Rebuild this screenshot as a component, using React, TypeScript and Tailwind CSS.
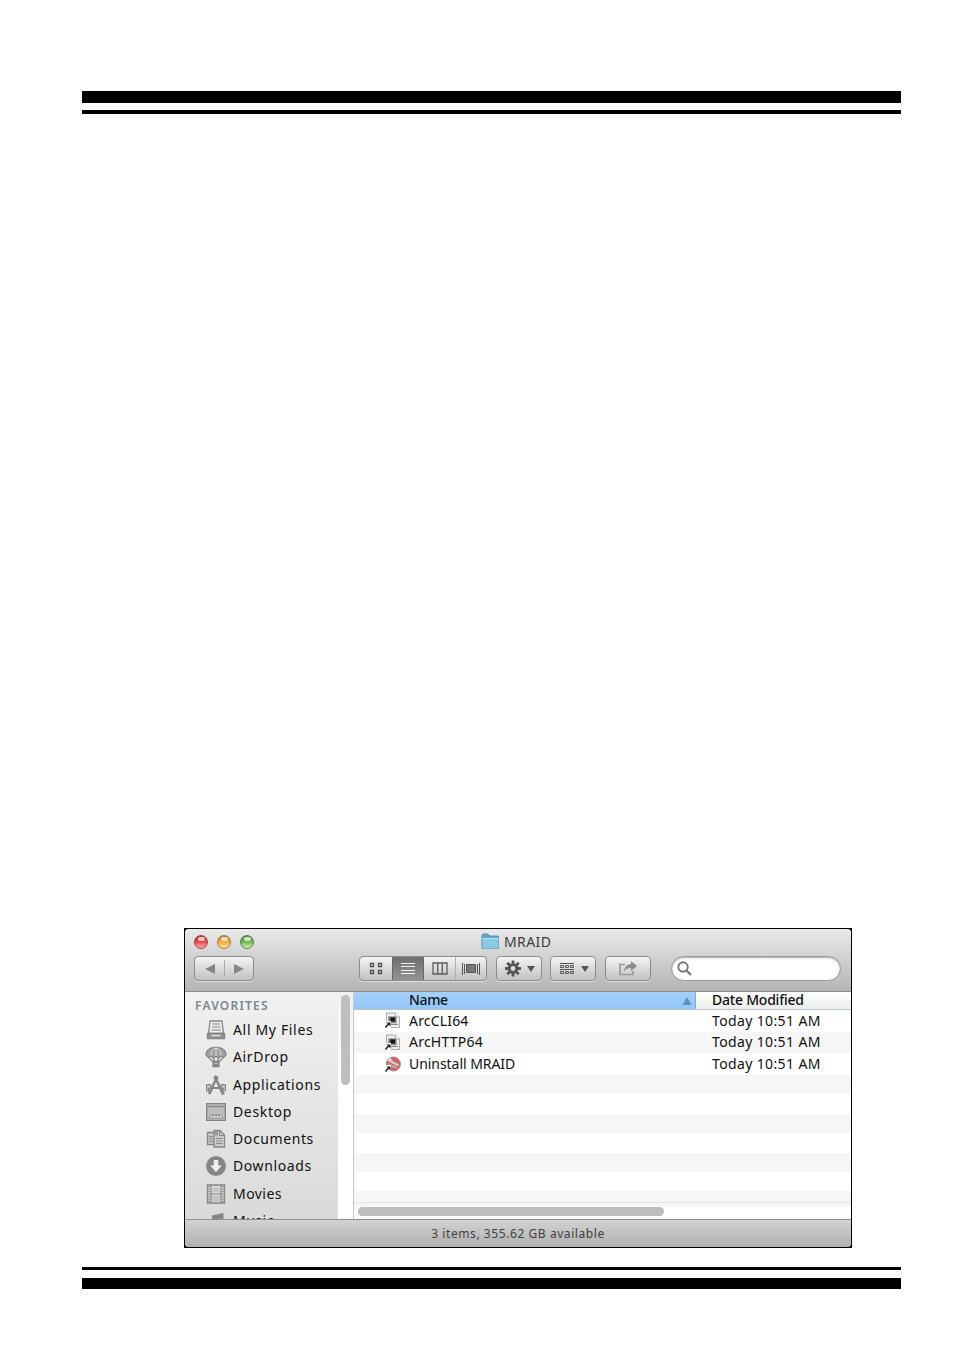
import type { ReactNode } from "react";

const BUTTON =
	"flex h-[25px] rounded-[4px] border border-[#8c8c8c] bg-linear-to-b from-[#f4f4f4] to-[#c2c2c2] shadow-[0_1px_0_#dedede]";

interface IconProps {
	children: ReactNode;
}

function SideIcon({ children }: IconProps) {
	return (
		<svg className="shrink-0" width="22" height="22" viewBox="0 0 22 22" fill="none" stroke="#858585" strokeWidth="1.3">
			{children}
		</svg>
	);
}

const favorites = [
	{
		name: "All My Files",
		tracking: "tracking-[0.66px]",
		icon: (
			<SideIcon>
				<path d="M5 2h12l1.500 12.500h-15z" fill="#ececec" />
				<path d="M7 5h8M7 8h8.500M6.500 11h9.500" strokeWidth="1.200" />
				<path d="M2.500 14.500h17v5h-17z" fill="#929292" />
				<path d="M6.500 16.500h9" stroke="#e2e2e2" strokeWidth="1.500" />
			</SideIcon>
		),
	},
	{
		name: "AirDrop",
		tracking: "tracking-[0.65px]",
		icon: (
			<SideIcon>
				<path d="M1 9C1 4 5.500 1.300 11 1.300S21 4 21 9l-2.500 2.500L16 10l-2.200 2L11 10.400 8.200 12 6 10l-2.500 1.500z" fill="#a2a2a2" />
				<path d="M6 9.500c0-4 2-7 5-7.500 3 .5 5 3.500 5 7.500M11 2v8" stroke="#dedede" strokeWidth="1" />
				<path d="M3.500 11.500l5 4.500M18.500 11.500l-5 4.500M8.500 12l1 3M13.500 12l-1 3" strokeWidth="1.200" />
				<path d="M8 15.500h6v5H8z" fill="#858585" />
				<path d="M9.500 17.500h3" stroke="#ccc" strokeWidth="1" />
			</SideIcon>
		),
	},
	{
		name: "Applications",
		tracking: "tracking-[0.63px]",
		icon: (
			<SideIcon>
				<path d="M1.500 10.500h4v3h11v-3h4v6.500h-2v-2.500h-15V17h-2z" fill="#bcbcbc" strokeWidth="1" />
				<path d="M12.500 3L4 20" strokeWidth="2.800" />
				<path d="M9.500 3L18.500 20.500" strokeWidth="2.800" />
				<path d="M9.500 2l3 1.500" strokeWidth="2.400" />
				<path d="M11 8l-2.500 5h5z" fill="#e4e4e4" stroke="none" />
			</SideIcon>
		),
	},
	{
		name: "Desktop",
		tracking: "tracking-[0.65px]",
		icon: (
			<SideIcon>
				<path d="M1.700 2.700h18.600v16.600H1.700z" fill="#bcbcbc" />
				<path d="M2 5.500h18" />
				<path d="M3.500 17.500l2-4h11l2 4z" fill="#8a8a8a" stroke="none" />
				<path d="M5.500 15.800h11.500" stroke="#f0f0f0" strokeWidth="2" strokeDasharray="2 1.100" />
			</SideIcon>
		),
	},
	{
		name: "Documents",
		tracking: "tracking-[0.6px]",
		icon: (
			<SideIcon>
				<path d="M2.500 4.500h8v12h-8z" fill="#c8c8c8" />
				<path d="M4 8.500h4M4 11h4M4 13.500h4" strokeWidth="1" />
				<path d="M9 2.500h6l4.500 4.500v12H9z" fill="#cecece" />
				<path d="M14.500 2.500V7.500h5M11 10.500h6.500M11 13h6.500M11 15.500h6.500" strokeWidth="1" />
				<path d="M9 2.500h4v5H9z" fill="#9a9a9a" stroke="none" />
			</SideIcon>
		),
	},
	{
		name: "Downloads",
		tracking: "tracking-[0.6px]",
		icon: (
			<SideIcon>
				<circle cx="11" cy="11" r="10" fill="#858585" stroke="none" />
				<path d="M8.700 5h4.600v5.500h3.700L11 17l-6-6.500h3.700z" fill="#f0f0f0" stroke="none" />
			</SideIcon>
		),
	},
	{
		name: "Movies",
		tracking: "tracking-[0.45px]",
		icon: (
			<SideIcon>
				<path d="M2.500 2h17v18h-17z" fill="#d8d8d8" />
				<path d="M6 2v18M16 2v18M6 11h10" strokeWidth="1.100" />
				<path d="M4.200 3v17M17.800 3v17" strokeWidth="1.800" strokeDasharray="1 1.500" />
				<path d="M7.500 4.500h7v4.500h-7zM7.500 13h7v5h-7z" fill="#c4c4c4" stroke="none" />
			</SideIcon>
		),
	},
	{
		name: "Music",
		tracking: "tracking-[0.5px]",
		icon: (
			<SideIcon>
				<path d="M7 5.500l11.500-2.500v13a3 2.500 0 1 1-2-2.500V8.500L9 10v7.500a3 2.500 0 1 1-2-2.500z" fill="#858585" stroke="none" />
			</SideIcon>
		),
	},
];

function AliasArrow() {
	return (
		<>
			<path d="M1 9h6v7H1z" fill="#f5f5f5" />
			<path d="M1.500 15.500l3-3.500" stroke="#222" strokeWidth="1.500" fill="none" />
			<path d="M2.500 10.500h4V14.500z" fill="#222" />
		</>
	);
}

function TerminalFile() {
	return (
		<svg width="17" height="17" viewBox="0 0 17 17">
			<path d="M2.500 1h9l4 4v10.500h-13z" fill="#eee" stroke="#aaa" />
			<path d="M11.500 1v4h4" fill="#fff" stroke="#aaa" />
			<path d="M4.500 4.500h8v6.500h-8z" fill="#777" stroke="#aaa" />
			<path d="M6.500 5.500h4.500v4H6.500z" fill="#151515" />
			<path d="M7 12.500h7" stroke="#888" />
			<AliasArrow />
		</svg>
	);
}

function UninstallFile() {
	return (
		<svg width="17" height="17" viewBox="0 0 17 17">
			<circle cx="9.300" cy="8" r="7" fill="#d26569" stroke="#a07d7d" />
			<path d="M2 4l4.500-2.500 2.500 4 6 3-1 1.500-5-2z" fill="#d9cfcf" />
			<path d="M3.500 7l5 2 5.500 2-3 1.500-6-3z" fill="#b8aaaa" />
			<AliasArrow />
		</svg>
	);
}

const files = [
	{ name: "ArcCLI64", tracking: "tracking-[0.18px]", date: "Today 10:51 AM", icon: <TerminalFile /> },
	{ name: "ArcHTTP64", tracking: "tracking-[0.22px]", date: "Today 10:51 AM", icon: <TerminalFile /> },
	{ name: "Uninstall MRAID", tracking: "tracking-[-0.05px]", date: "Today 10:51 AM", icon: <UninstallFile /> },
];

const lights = [
	"from-[#b52b32] via-[#e9474c] to-[#ffaaa8] border-[#a24246]",
	"from-[#c57c22] via-[#f3a93c] to-[#ffe794] border-[#a87a3c]",
	"from-[#4c8b38] via-[#73b955] to-[#d0f5ac] border-[#587f4b]",
];

function TitleBar() {
	return (
		<div className="flex h-[25px] items-center pl-[9px]">
			<div className="flex w-[287px] gap-[9px]">
				{lights.map((light) => (
					<span key={light} className={`flex h-[14px] w-[14px] justify-center rounded-full border bg-linear-to-b pt-px ${light}`}>
						<span className="h-[4px] w-[7px] rounded-full bg-white/70" />
					</span>
				))}
			</div>
			<svg width="19" height="17" viewBox="0 0 19 17">
				<path d="M1 15.500v-13l1-1.500h5l1.500 2H17l.5 1v11.500z" fill="#5fa6c6" stroke="#5993ae" />
				<path d="M1.500 5h16v10.500h-16z" fill="#8cc9e2" />
				<path d="M1.500 5.500h16" stroke="#b9e2f0" />
			</svg>
			<span className="ml-[4px] text-[14px] tracking-[0.4px] text-[#3c3c3c]">MRAID</span>
		</div>
	);
}

function Toolbar() {
	return (
		<div className="mt-[2px] flex pl-[9px]">
			<div className={`${BUTTON} w-[60px] items-center`}>
				<svg width="58" height="23" viewBox="0 0 58 23">
					<path d="M20 7v10l-10-5zM39 7v10l10-5z" fill="#858585" />
					<path d="M29.500 3v17" stroke="#aaa" />
				</svg>
			</div>
			<div className={`${BUTTON} ml-[105px] w-[128px] overflow-hidden`}>
				<div className="flex w-[32px] items-center justify-center">
					<svg width="14" height="14" viewBox="0 0 14 14" fill="none" stroke="#505050" strokeWidth="1.300">
						<path d="M1.500 1.500h3v3h-3zM9.500 1.500h3v3h-3zM1.500 8.500h3v3h-3zM9.500 8.500h3v3h-3z" />
					</svg>
				</div>
				<div className="flex w-[32px] items-center justify-center border-x border-[#656565] bg-linear-to-b from-[#6f6f6f] to-[#949494]">
					<svg width="14" height="14" viewBox="0 0 14 14" stroke="#f2f2f2">
						<path d="M0 1.500h14M0 4.500h14M0 8.500h14M0 11.500h14" />
					</svg>
				</div>
				<div className="flex w-[31px] items-center justify-center">
					<svg width="16" height="13" viewBox="0 0 16 13" fill="none" stroke="#5a5a5a" strokeWidth="1.300">
						<path d="M1 1h14v11H1zM5.700 1v11M10.300 1v11" />
					</svg>
				</div>
				<div className="flex flex-1 items-center justify-center border-l border-[#b0b0b0]">
					<svg width="18" height="12" viewBox="0 0 18 12" stroke="#555">
						<path d="M.5 0v12M2.500 1v10M15.500 1v10M17.500 0v12" />
						<path d="M4.500 1.500h9v8h-9z" fill="#777" />
					</svg>
				</div>
			</div>
			<div className={`${BUTTON} ml-[9px] w-[46px] items-center`}>
				<svg width="44" height="23" viewBox="0 0 44 23">
					<g stroke="#555" strokeWidth="2.800">
						<path d="M16 3.500v16M8 11.500h16M10.300 5.800l11.400 11.400M21.700 5.800L10.300 17.200" />
						<circle cx="16" cy="11.500" r="3.800" fill="#ddd" />
					</g>
					<path d="M30 9h8l-4 6z" fill="#555" />
				</svg>
			</div>
			<div className={`${BUTTON} ml-[8px] w-[46px] items-center`}>
				<svg width="44" height="23" viewBox="0 0 44 23">
					<path d="M9 6.500h14M9 12.500h14" stroke="#555" />
					<path d="M9.500 8.500h3v2h-3zM14.500 8.500h3v2h-3zM19.500 8.500h3v2h-3zM9.500 14.500h3v2h-3zM14.500 14.500h3v2h-3zM19.500 14.500h3v2h-3z" fill="none" stroke="#555" />
					<path d="M30 9h8l-4 6z" fill="#555" />
				</svg>
			</div>
			<div className={`${BUTTON} ml-[9px] w-[46px] items-center justify-center`}>
				<svg width="18" height="15" viewBox="0 0 18 15">
					<path d="M6 3.500H1v10h13v-3.500" fill="none" stroke="#999" strokeWidth="1.700" />
					<path d="M12 0l6 5-6 5V7C8.500 7 6.500 8 5 10.500 5.300 6 8 3.300 12 3z" fill="#8c8c8c" />
				</svg>
			</div>
			<div className="ml-[20px] flex h-[25px] w-[170px] items-center rounded-full border border-[#999] bg-white pl-[5px] shadow-[inset_0_1px_2px_#aaa]">
				<svg width="15" height="15" viewBox="0 0 15 15" fill="none" stroke="#777">
					<circle cx="6" cy="6" r="4.700" strokeWidth="1.900" />
					<path d="M9.500 9.500l4.500 4.500" strokeWidth="2.300" />
				</svg>
			</div>
		</div>
	);
}

function Sidebar() {
	return (
		<>
			<div className="w-[153px] overflow-hidden bg-linear-to-b from-[#f1f1f1] to-[#dadada]">
				<div className="flex h-[24.300px] items-center pt-[3px] pl-[10px] text-[12px] font-semibold tracking-[1.2px] text-[#7d868f]">FAVORITES</div>
				{favorites.map(({ name, tracking, icon }) => (
					<div key={name} className="flex h-[27.300px] items-center gap-[6px] pl-[20px]">
						{icon}
						<span className={`whitespace-nowrap ${tracking}`}>{name}</span>
					</div>
				))}
			</div>
			<div className="w-[15px] bg-linear-to-b from-[#f0f0f0] to-white to-40% pt-[3px] pl-[3px]">
				<div className="h-[90px] w-[9px] rounded-full bg-[#bebebe]" />
			</div>
		</>
	);
}

function FileList() {
	return (
		<div className="flex flex-1 flex-col border-l border-[#c8c8c8] bg-white">
			<div className="flex h-[18px] items-center border-b border-[#b9c3cc] bg-linear-to-b from-white to-[#ededed]">
				<div className="flex h-full w-[342px] items-center justify-between border-r border-[#7eaad5] bg-linear-to-b from-[#a5d0fb] to-[#92c5f8] pr-[3px] pl-[55px]">
					<span className="relative -top-px font-medium tracking-[-0.35px]">Name</span>
					<svg width="10" height="8" viewBox="0 0 10 8">
						<path d="M5 0l4.500 8h-9z" fill="#5b91c5" />
					</svg>
				</div>
				<span className="relative -top-px pl-[16px] font-medium tracking-[-0.22px]">Date Modified</span>
			</div>
			{files.map(({ name, tracking, date, icon }) => (
				<div key={name} className="flex h-[21.670px] items-center pl-[30px] even:bg-white odd:bg-[#f6f6f6]">
					{icon}
					<span className={`w-[303px] pl-[8px] ${tracking}`}>{name}</span>
					<span className="pl-[8px] tracking-[0.37px]">{date}</span>
				</div>
			))}
			{[1, 2, 3, 4, 5, 6].map((row) => (
				<div key={row} className="h-[19.400px] odd:bg-[#f6f6f6]" />
			))}
			<div className="flex-1 bg-[#f6f6f6]" />
			<div className="h-[17px] border-t border-[#e4e4e4] bg-linear-to-b from-[#f3f3f3] to-white to-40% pt-[4px] pl-[4px]">
				<div className="h-[9px] w-[306px] rounded-full bg-[#bdbdbd]" />
			</div>
		</div>
	);
}

export default function App() {
	return (
		<div className="flex h-[1354px] w-[954px] flex-col bg-white pt-[91px] pl-[82px] font-['Noto_Sans',sans-serif] text-[14px] leading-[18px] text-[#111]">
			<div className="h-[12px] w-[819px] bg-black" />
			<div className="mt-[7px] h-[4px] w-[819px] bg-black" />

			<div className="mt-[814px] ml-[102px] h-[320px] w-[668px] border border-black bg-black">
				<div className="flex h-full flex-col overflow-hidden rounded-[4px] bg-white">
					<div className="h-[63px] border-b border-[#8b8b8b] bg-linear-to-b from-[#e9e9e9] to-[#b5b5b5]">
						<TitleBar />
						<Toolbar />
					</div>
					<div className="flex h-[227px]">
						<Sidebar />
						<FileList />
					</div>
					<div className="flex h-[28px] items-center justify-center border-t border-[#8e8e8e] bg-linear-to-b from-[#d2d2d2] to-[#b0b0b0] text-[12px] tracking-[0.57px] text-[#414141]">
						3 items, 355.62 GB available
					</div>
				</div>
			</div>

			<div className="mt-[19px] h-[3px] w-[819px] bg-black" />
			<div className="mt-[8px] h-[11px] w-[819px] bg-black" />
		</div>
	);
}
